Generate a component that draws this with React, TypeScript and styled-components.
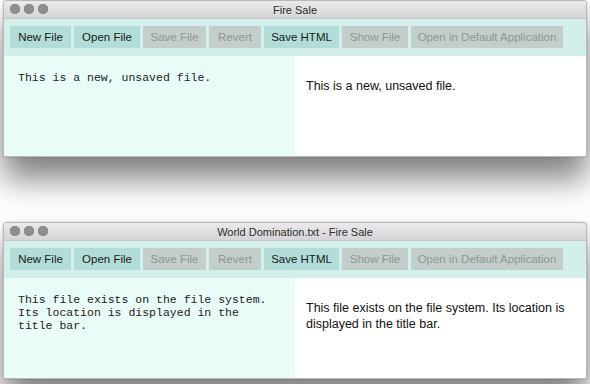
import styled, { createGlobalStyle } from "styled-components";

const Global = createGlobalStyle`
  body {
    margin: 0;
    background: #ffffff;
    font-family: "Liberation Sans", Arial, sans-serif;
    overflow: hidden;
  }
`;

const Page = styled.div`
  width: 590px;
  height: 384px;
  display: flex;
  flex-direction: column;
  gap: 65px;
  padding: 0 3px;
  box-sizing: border-box;
`;

const Window = styled.div`
  display: flex;
  flex-direction: column;
  height: 157px;
  flex-shrink: 0;
  border: 1px solid #b9b9b9;
  border-radius: 4px 4px 2px 2px;
  overflow: hidden;
  box-sizing: border-box;
  box-shadow: 0 22px 32px rgba(0, 0, 0, 0.5), 0 0 2px rgba(0, 0, 0, 0.25);
  background: #fff;
`;

const TitleBar = styled.div`
  position: relative;
  height: 17px;
  display: flex;
  align-items: center;
  justify-content: center;
  background: linear-gradient(#ebe9eb, #d6d4d6);
  border-bottom: 1px solid #c9c7c9;
  font-size: 11px;
  color: #2c2c2c;
`;

const Lights = styled.div`
  position: absolute;
  left: 6px;
  top: 3px;
  display: flex;
  gap: 4px;
`;

const Light = styled.span`
  width: 10px;
  height: 10px;
  border-radius: 50%;
  background: #8f8d90;
  box-shadow: inset 0 0 0 0.5px #7d7b7e;
`;

const Toolbar = styled.div`
  display: flex;
  gap: 3px;
  padding: 7px 6px 8px;
  background: #d3efeb;
`;

const Button = styled.div<{ $disabled?: boolean; $width: number }>`
  width: ${(p) => p.$width}px;
  height: 22px;
  flex-shrink: 0;
  display: flex;
  align-items: center;
  justify-content: center;
  font-size: 11.5px;
  white-space: nowrap;
  background: ${(p) => (p.$disabled ? "#c3cdcb" : "#b1dcd8")};
  color: ${(p) => (p.$disabled ? "#8b9795" : "#1a1a1a")};
`;

const Content = styled.div`
  flex: 1;
  display: flex;
`;

const Editor = styled.div`
  width: 291px;
  background: #eafcf8;
  padding: 15px 14px;
  box-sizing: border-box;
  font-family: "Liberation Mono", "Courier New", monospace;
  font-size: 11.5px;
  line-height: 13px;
  color: #222;
  white-space: pre-wrap;
`;

const Preview = styled.div`
  flex: 1;
  padding: 22px 11px;
  font-size: 12.5px;
  line-height: 16px;
  color: #111;
`;

const buttons: [string, boolean, number][] = [
  ["New File", false, 61],
  ["Open File", false, 66],
  ["Save File", true, 63],
  ["Revert", true, 52],
  ["Save HTML", false, 75],
  ["Show File", true, 66],
  ["Open in Default Application", true, 152],
];

const AppWindow = ({
  title,
  source,
  html,
}: {
  title: string;
  source: string;
  html: string;
}) => (
  <Window>
    <TitleBar>
      <Lights>
        <Light />
        <Light />
        <Light />
      </Lights>
      {title}
    </TitleBar>
    <Toolbar>
      {buttons.map(([label, disabled, width]) => (
        <Button key={label} $disabled={disabled} $width={width}>
          {label}
        </Button>
      ))}
    </Toolbar>
    <Content>
      <Editor>{source}</Editor>
      <Preview>{html}</Preview>
    </Content>
  </Window>
);

export default function App() {
  return (
    <>
      <Global />
      <Page>
        <AppWindow
          title="Fire Sale"
          source="This is a new, unsaved file."
          html="This is a new, unsaved file."
        />
        <AppWindow
          title="World Domination.txt - Fire Sale"
          source={"This file exists on the file system.\nIts location is displayed in the\ntitle bar."}
          html="This file exists on the file system. Its location is displayed in the title bar."
        />
      </Page>
    </>
  );
}
